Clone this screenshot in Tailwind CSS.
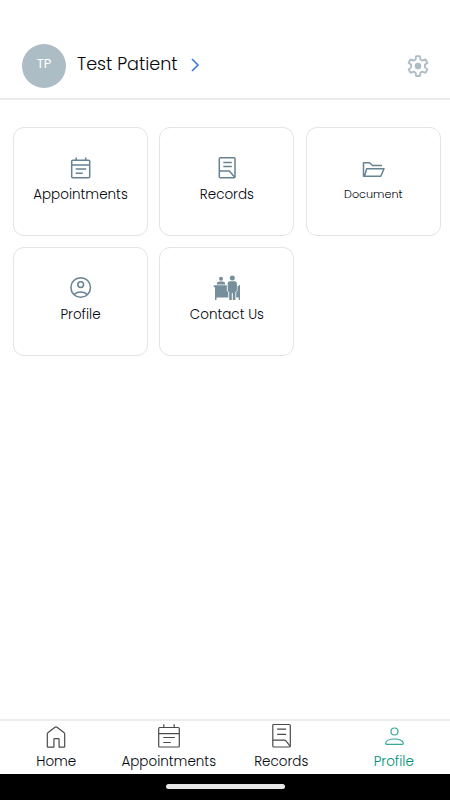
<!DOCTYPE html>
<html lang="en">
<head>
<meta charset="utf-8">
<meta name="viewport" content="width=device-width, initial-scale=1">
<title>Profile</title>
<script src="https://cdn.jsdelivr.net/npm/@tailwindcss/browser@4"></script>
</head>
<body class="flex h-[800px] w-[450px] flex-col overflow-hidden bg-white font-['Poppins','Inter',sans-serif] text-[#05070d]">
<header class="flex h-[100px] shrink-0 items-end border-b-2 border-[#ebebeb] pb-[10.500px] pl-[22px] pr-[20.500px]">
  <div class="flex h-11 w-11 items-center justify-center rounded-full bg-[#adbdc5] text-[13px] text-white"><span class="-mt-[3px]">TP</span></div>
  <h1 class="ml-[11px] mb-[10.500px] whitespace-nowrap text-[17.6px] leading-[26px] font-light">Test Patient</h1>
  <svg class="ml-[12.500px] mb-[16px] h-[14px] w-[10px]" viewBox="0 0 10 14" fill="none" stroke="#3978e5" stroke-width="1.6"><path d="M2 1l6 6-6 6"/></svg>
  <svg class="ml-auto mb-[8.500px] h-6 w-6" viewBox="0 0 24 24" fill="none" stroke="#adbdc5" stroke-width="1.8" stroke-linejoin="round"><path d="M10.1 1.2h3.8l.5 3.3 2 1.1 3.100-1.200 1.9 3.4-2.5 2v2.600l2.5 2-1.9 3.4-3.100-1.200-2 1.1-.5 3.300h-3.8L9.600 17.700l-2-1.100-3.100 1.200-1.900-3.400 2.500-2v-2.600l-2.500-2L4.500 4.400l3.100 1.200 2-1.100z"/><circle cx="12" cy="11.100" r="3.300" fill="#adbdc5" stroke="none"/></svg>
</header>

<main class="grid grow grid-cols-[135px_135px_135px] content-start gap-x-[11.4px] gap-y-[11px] pl-[13px] pt-[27px] text-[13.5px] leading-5 font-light">
  <section class="flex h-[109px] flex-col items-center rounded-[11px] border border-[#e3e4e7] pt-[28px]">
    <svg class="h-6 w-6" viewBox="0 0 24 24" fill="none" stroke="#668392" stroke-width="1.5"><rect x="2.700" y="4.300" width="18" height="17.500" rx="1"/><path d="M2.700 9h18M7.200 1.500v2.800M16.700 1.500v2.800M6.700 13h10.500M6.700 17.300h7"/></svg>
    <span class="mt-[4.500px]">Appointments</span>
  </section>
  <section class="flex h-[109px] flex-col items-center rounded-[11px] border border-[#e3e4e7] pt-[28px]">
    <svg class="h-6 w-6" viewBox="0 0 24 24" fill="none" stroke="#668392" stroke-width="1.5" stroke-linejoin="round"><rect x="4.300" y="1.800" width="15.700" height="20" rx="1"/><path d="M8.300 6.500h8.500M8.300 10.500h8.500M4.300 15h10l5.700 6.500"/></svg>
    <span class="mt-[4.500px]">Records</span>
  </section>
  <section class="flex h-[109px] flex-col items-center rounded-[11px] border border-[#e3e4e7] pt-[28px]">
    <svg class="h-6 w-6" viewBox="0 0 24 24" fill="none" stroke="#668392" stroke-width="1.500" stroke-linejoin="round"><path d="M21 9.500H11.500L8.500 6.700H2.500v13.600h17.300l3.200-7.500H5.700L3.500 20.300"/></svg>
    <span class="mt-[3.500px] text-[11.200px]">Document</span>
  </section>
  <section class="flex h-[109px] flex-col items-center rounded-[11px] border border-[#e3e4e7] pt-[28px]">
    <svg class="h-6 w-6" viewBox="0 0 24 24" fill="none" stroke="#668392" stroke-width="1.500"><circle cx="11.700" cy="11.500" r="9.800"/><circle cx="11.700" cy="8.600" r="2.900"/><path d="M5.200 18.300c3.600-3 9.400-3 13 0"/></svg>
    <span class="mt-[4.500px]">Profile</span>
  </section>
  <section class="flex h-[109px] flex-col items-center rounded-[11px] border border-[#e3e4e7] pt-[27px]">
    <svg class="h-[26px] w-[28px]" viewBox="0 0 28 26" fill="#768f9c"><circle cx="8" cy="3.800" r="2"/><path d="M3.800 9.500V8.500Q4 6.500 6.500 6.500h3q2.500 0 2.700 2v1zM.800 10.300h13v5.800l1.500 1V22.500H3.500V25H2V12.300H.800zM24.500 11H26v-1h1v15h-1.200v-2.500h-2.600v-5.400l1.300-1z"/><circle cx="19.300" cy="2.900" r="2.500"/><path d="M17 6.300h4.600q2.300 0 2.300 2.600v7l-1.500 1V25h-2.600v-7h-1v7H16.200v-8.100l-1.500-1v-7Q14.700 6.300 17 6.300z"/></svg>
    <span class="mt-[3.500px]">Contact Us</span>
  </section>
</main>

<nav class="grid h-[55px] shrink-0 grid-cols-4 border-t-2 border-[#ededed] text-[13.5px] leading-5 font-light">
  <a class="flex flex-col items-center pt-px">
    <svg class="h-7 w-7" viewBox="0 0 28 28" fill="none" stroke="#4b4b4b" stroke-width="1.200" stroke-linejoin="round"><path d="M5.300 24.500V12q0-.7.500-1.200L13 5.200q1-.7 2 0l7.200 5.600q.500.500.500 1.200V24.500q0 .600-.600.600h-5V17.500q0-.800-.800-.800h-3.600q-.800 0-.800.800v7.600h-6q-.600 0-.600-.600z"/></svg>
    <span class="mt-[2px]">Home</span>
  </a>
  <a class="flex flex-col items-center pt-px">
    <svg class="h-7 w-7" viewBox="0 0 28 28" fill="none" stroke="#4b4b4b" stroke-width="1.200"><rect x="3.700" y="5.500" width="20.600" height="19.500" rx="1"/><path d="M3.700 11.700h20.600M8.800 2.200v3.300M19.200 2.200v3.300M8.300 15.500h11.500M8.300 20.500h7.500"/></svg>
    <span class="mt-[2px]">Appointments</span>
  </a>
  <a class="flex flex-col items-center pt-px">
    <svg class="h-7 w-7" viewBox="0 0 28 28" fill="none" stroke="#4b4b4b" stroke-width="1.200" stroke-linejoin="round"><rect x="5.800" y="2.500" width="17.500" height="22.500" rx="1"/><path d="M10.100 7.200h9M10.100 12.400h9M5.800 18.200h11.500q1 0 1.600.700l4.200 5.300"/></svg>
    <span class="mt-[2px]">Records</span>
  </a>
  <a class="flex flex-col items-center pt-px text-[#008f78]">
    <svg class="h-7 w-7" viewBox="0 0 28 28" fill="none" stroke="#35aa98" stroke-width="1.200" stroke-linejoin="round"><circle cx="14.500" cy="9.500" r="3.500"/><path d="M5.700 21.300c0-2.500 3.600-4.300 8.800-4.300s8.800 1.800 8.800 4.300q0 1-1 1H6.700q-1 0-1-1z"/></svg>
    <span class="mt-[2px]">Profile</span>
  </a>
</nav>
<footer class="flex h-[26px] shrink-0 justify-center bg-black pt-[10px]"><div class="h-[5px] w-[119px] rounded-full bg-[#e8e8e8]"></div></footer>
</body>
</html>
